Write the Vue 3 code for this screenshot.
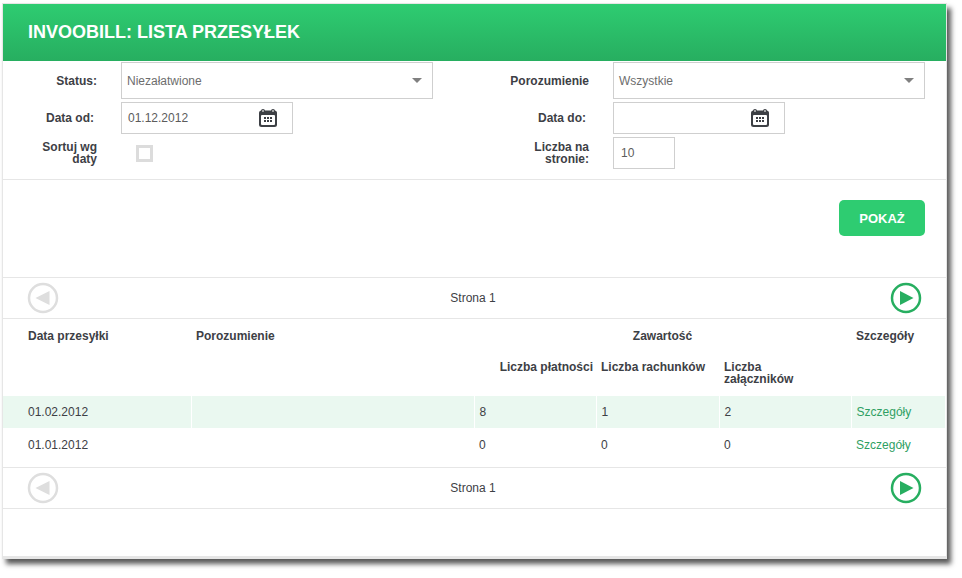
<script setup>
const rows = [
  { date: '01.02.2012', payments: 8, bills: 1, attachments: 2 },
  { date: '01.01.2012', payments: 0, bills: 0, attachments: 0 },
]
</script>

<template>
  <div class="page">
    <div class="panel">
      <h1 class="title">INVOOBILL: LISTA PRZESYŁEK</h1>

      <div class="filters">
        <div class="filter-row row-select">
          <div class="field">
            <label class="label">Status:</label>
            <div class="select"><span>Niezałatwione</span><i class="caret"></i></div>
          </div>
          <div class="field field-right">
            <label class="label">Porozumienie</label>
            <div class="select"><span>Wszystkie</span><i class="caret"></i></div>
          </div>
        </div>
        <div class="filter-row row-date">
          <div class="field">
            <label class="label">Data od:</label>
            <div class="date">
              <span>01.12.2012</span>
              <svg class="cal" viewBox="0 0 18 18" width="18" height="18">
                <rect x="0" y="1.500" width="18" height="16.500" rx="2.500" fill="#3d4045"/>
                <circle cx="4" cy="2" r="2" fill="#3d4045"/>
                <circle cx="14" cy="2" r="2" fill="#3d4045"/>
                <circle cx="4" cy="2" r="1" fill="#c4c4c4"/>
                <circle cx="14" cy="2" r="1" fill="#c4c4c4"/>
                <rect x="2" y="6" width="14" height="10" rx="1" fill="#fff"/>
                <path fill="#3d4045" d="M5 8h2v2H5zM8 8h2v2H8zM11 8h2v2h-2zM5 11h2v2H5zM8 11h2v2H8zM11 11h2v2h-2z"/>
              </svg>
            </div>
          </div>
          <div class="field field-right">
            <label class="label">Data do:</label>
            <div class="date">
              <span></span>
              <svg class="cal" viewBox="0 0 18 18" width="18" height="18">
                <rect x="0" y="1.500" width="18" height="16.500" rx="2.500" fill="#3d4045"/>
                <circle cx="4" cy="2" r="2" fill="#3d4045"/>
                <circle cx="14" cy="2" r="2" fill="#3d4045"/>
                <circle cx="4" cy="2" r="1" fill="#c4c4c4"/>
                <circle cx="14" cy="2" r="1" fill="#c4c4c4"/>
                <rect x="2" y="6" width="14" height="10" rx="1" fill="#fff"/>
                <path fill="#3d4045" d="M5 8h2v2H5zM8 8h2v2H8zM11 8h2v2h-2zM5 11h2v2H5zM8 11h2v2H8zM11 11h2v2h-2z"/>
              </svg>
            </div>
          </div>
        </div>
        <div class="filter-row row-last">
          <div class="field">
            <label class="label two-line">Sortuj wg daty</label>
            <div class="check-wrap"><i class="check"></i></div>
          </div>
          <div class="field field-right">
            <label class="label two-line">Liczba na stronie:</label>
            <div class="per-page">10</div>
          </div>
        </div>
      </div>

      <div class="actions">
        <button class="btn" type="button">POKAŻ</button>
      </div>

      <div class="pager">
        <svg viewBox="0 0 32 32" width="32" height="32">
          <circle cx="16" cy="16" r="14" fill="none" stroke="#dedede" stroke-width="2.500"/>
          <path d="M8.500 16l14-7v14z" fill="#dedede"/>
        </svg>
        <span class="page-no">Strona 1</span>
        <svg viewBox="0 0 32 32" width="32" height="32">
          <circle cx="16" cy="16" r="14" fill="none" stroke="#27ae60" stroke-width="2.500"/>
          <path d="M23.500 16l-13.500-7v14z" fill="#27ae60"/>
        </svg>
      </div>

      <table class="list">
        <colgroup>
          <col class="c1" /><col class="c2" /><col class="c3" /><col class="c4" /><col class="c5" /><col class="c6" />
        </colgroup>
        <thead>
          <tr class="head-1">
            <th class="first">Data przesyłki</th>
            <th>Porozumienie</th>
            <th colspan="3" class="center">Zawartość</th>
            <th>Szczegóły</th>
          </tr>
          <tr class="head-2">
            <th></th>
            <th></th>
            <th class="pay">Liczba płatności</th>
            <th>Liczba rachunków</th>
            <th class="att">Liczba załączników</th>
            <th></th>
          </tr>
        </thead>
        <tbody>
          <tr v-for="row in rows" :key="row.date">
            <td class="first">{{ row.date }}</td>
            <td></td>
            <td>{{ row.payments }}</td>
            <td>{{ row.bills }}</td>
            <td>{{ row.attachments }}</td>
            <td><a class="link">Szczegóły</a></td>
          </tr>
        </tbody>
      </table>

      <div class="pager pager-bottom">
        <svg viewBox="0 0 32 32" width="32" height="32">
          <circle cx="16" cy="16" r="14" fill="none" stroke="#dedede" stroke-width="2.500"/>
          <path d="M8.500 16l14-7v14z" fill="#dedede"/>
        </svg>
        <span class="page-no">Strona 1</span>
        <svg viewBox="0 0 32 32" width="32" height="32">
          <circle cx="16" cy="16" r="14" fill="none" stroke="#27ae60" stroke-width="2.500"/>
          <path d="M23.500 16l-13.500-7v14z" fill="#27ae60"/>
        </svg>
      </div>
    </div>
  </div>
</template>

<style>
html, body {
  background: #fff;
}
</style>

<style scoped>
.page {
  width: 962px;
  height: 578px;
  padding: 3px 0 0 2px;
  box-sizing: border-box;
  font-family: "Liberation Sans", Arial, sans-serif;
  font-size: 12px;
  color: #3d4045;
}

.panel {
  width: 945px;
  height: 556px;
  box-sizing: border-box;
  background: #fff;
  border: 1px solid #e6e6e6;
  border-width: 1px 1px 3px 1px;
  box-shadow: 4px 5px 5px rgba(0, 0, 0, 0.65);
}

.title {
  margin: 0;
  height: 57px;
  padding-left: 25px;
  line-height: 57px;
  font-size: 18px;
  font-weight: bold;
  color: #fff;
  background: linear-gradient(#2ecc71, #27ae60);
}

.filters {
  height: 119px;
  padding-top: 1px;
  box-sizing: border-box;
  border-bottom: 1px solid #e6e6e6;
}

.filter-row {
  display: flex;
}

.row-select { height: 40px; }
.row-date { height: 35px; }

.field {
  display: flex;
  flex: none;
  width: 492px;
  align-items: flex-start;
}

.field-right {
  width: 451px;
}

.label {
  width: 94px;
  margin-right: 24px;
  flex: none;
  box-sizing: border-box;
  text-align: right;
  font-weight: bold;
  line-height: 38px;
}

.two-line {
  line-height: 12px;
  padding-top: 4px;
  padding-left: 20px;
}

.row-date .label {
  line-height: 32px;
  padding-right: 3px;
}

.select {
  width: 312px;
  height: 37px;
  box-sizing: border-box;
  border: 1px solid #cfcfcf;
  display: flex;
  align-items: center;
  justify-content: space-between;
  padding: 0 10px 0 5px;
  color: #6d6d6d;
}

.caret {
  width: 0;
  height: 0;
  border-left: 5px solid transparent;
  border-right: 5px solid transparent;
  border-top: 5px solid #808080;
}

.date {
  width: 172px;
  height: 32px;
  box-sizing: border-box;
  border: 1px solid #cfcfcf;
  display: flex;
  align-items: center;
  justify-content: space-between;
  padding: 0 15px 0 6px;
  color: #5c5c5c;
}

.check-wrap {
  padding: 8px 0 0 15px;
}

.check {
  display: block;
  width: 17px;
  height: 17px;
  box-sizing: border-box;
  border: 3px solid #dcdcdc;
}

.per-page {
  width: 62px;
  height: 32px;
  box-sizing: border-box;
  border: 1px solid #cfcfcf;
  padding-left: 7px;
  line-height: 30px;
  color: #5c5c5c;
}

.actions {
  height: 97px;
  padding: 20px 21px 0 0;
  box-sizing: border-box;
  display: flex;
  justify-content: flex-end;
  align-items: flex-start;
}

.btn {
  width: 86px;
  height: 36px;
  border: 0;
  border-radius: 5px;
  background: #2ecc71;
  color: #fff;
  font-family: inherit;
  font-size: 13px;
  font-weight: bold;
}

.pager {
  height: 42px;
  padding: 0 24px 0 24px;
  box-sizing: border-box;
  display: flex;
  align-items: center;
  justify-content: space-between;
  border-top: 1px solid #e6e6e6;
  border-bottom: 1px solid #e6e6e6;
}

.page-no {
  margin-right: 3px;
}

.list {
  width: 942px;
  table-layout: fixed;
  border-collapse: collapse;
}

.c1 { width: 188px; }
.c2 { width: 283px; }
.c3 { width: 122px; }
.c4 { width: 123px; }
.c5 { width: 132px; }
.c6 { width: 94px; }

th {
  font-weight: bold;
  text-align: left;
  padding: 0 5px;
  vertical-align: top;
  line-height: 12px;
}

.head-1 th {
  height: 31px;
  padding-top: 11px;
  box-sizing: border-box;
}

.head-2 th {
  height: 46px;
  padding-top: 11px;
  box-sizing: border-box;
}

th.att {
  padding-right: 40px;
}

th.first, td.first {
  padding-left: 25px;
}

th.center {
  text-align: center;
}

th.pay {
  text-align: right;
  white-space: nowrap;
  padding-right: 3px;
}

td {
  padding: 0 5px;
  height: 32px;
  box-sizing: border-box;
}

tbody tr:nth-child(1) td {
  background: #eaf8f0;
  border-right: 1px solid #fff;
}

tbody tr:nth-child(1) td:last-child {
  border-right: 0;
}

tbody tr:nth-child(2) td {
  height: 39px;
  padding-bottom: 6px;
}

.link {
  color: #2fa063;
}
</style>
